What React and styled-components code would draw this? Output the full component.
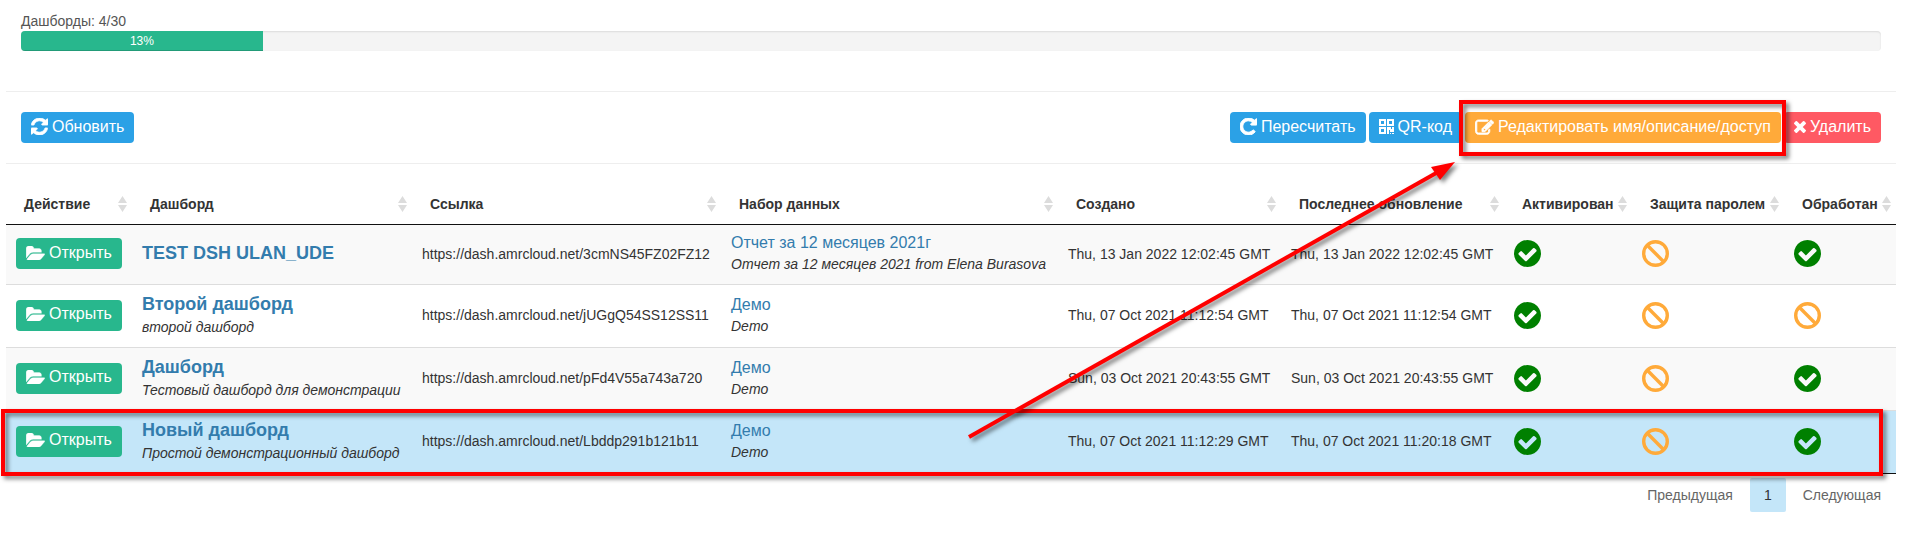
import React from "react";
import styled, { createGlobalStyle, css } from "styled-components";

const GlobalStyle = createGlobalStyle`
  * { box-sizing: border-box; }
  body {
    margin: 0;
    background: #fff;
    color: #333;
    font: 14px/20px "Liberation Sans", Arial, sans-serif;
  }
`;

const tones = { info: "#2ba1e6", success: "#28b78d", warning: "#ffaa3a", danger: "#ff5963" };

const Page = styled.main`
  position: relative;
  padding: 12px 15px 0 6px;
`;

const Usage = styled.section`
  padding: 0 15px 40px;
  color: #555;
`;

const UsageLabel = styled.div`
  line-height: 19px;
`;

const Track = styled.div`
  height: 20px;
  overflow: hidden;
  border-radius: 4px;
  background: #f4f4f4;
  box-shadow: inset 0 1px 2px rgba(0, 0, 0, 0.1);
`;

const Fill = styled.div`
  height: 100%;
  background: ${tones.success};
  box-shadow: inset 0 -1px 0 rgba(0, 0, 0, 0.15);
  color: #fff;
  font-size: 12px;
  line-height: 20px;
  text-align: center;
`;

const Toolbar = styled.div`
  display: flex;
  justify-content: space-between;
  padding: 20px 15px;
  border-top: 1px solid #eee;
  border-bottom: 1px solid #eee;
`;

const ButtonGroup = styled.div`
  display: flex;
  gap: 3px;
`;

const Button = styled.button`
  display: inline-flex;
  align-items: center;
  gap: 4px;
  height: 31px;
  padding: 0 10px 2px;
  border: 0;
  border-radius: 4px;
  background: ${(p) => tones[p.$tone]};
  color: #fff;
  font: inherit;
  font-size: 16px;
  white-space: nowrap;
  cursor: pointer;
  vertical-align: middle;
`;

const outline = css`
  position: absolute;
  border: 4px solid #f00;
  filter: drop-shadow(3px 3px 2px rgba(0, 0, 0, 0.5));
  pointer-events: none;
`;

const Marked = styled.div`
  position: relative;
  z-index: 1;
  &::after {
    content: "";
    inset: -12px -5px -13px -6px;
    ${outline}
  }
`;

const Table = styled.table`
  width: 100%;
  margin-top: 20px;
  border-collapse: separate;
  border-spacing: 0;
  border-bottom: 1px solid #111;
  table-layout: fixed;
`;

const Head = styled.th`
  height: 41px;
  padding: 0 5px 0 18px;
  border-bottom: 1px solid #111;
  font-weight: bold;
  text-align: left;
  white-space: nowrap;
`;

const HeadInner = styled.div`
  display: flex;
  align-items: center;
  justify-content: space-between;
`;

const Row = styled.tr`
  position: relative;
  background: ${(p) => (p.$selected ? "#c4e6f9" : p.$odd ? "#f9f9f9" : "#fff")};
  &:not(:first-child) > td { border-top: 1px solid #ddd; }
  ${(p) => p.$selected && css`
    > td:first-child::after {
      content: "";
      inset: -1px 13px -3px -5px;
      ${outline}
    }
  `}
`;

const Cell = styled.td`
  padding: 9px 10px 11px;
  vertical-align: middle;
  white-space: nowrap;
`;

const Link = styled.a`
  display: block;
  color: #337cad;
  font-size: ${(p) => (p.$strong ? "18px" : "16px")};
  font-weight: ${(p) => (p.$strong ? "bold" : "normal")};
  line-height: ${(p) => (p.$strong ? "21px" : "18px")};
  text-decoration: none;
`;

const Note = styled.em`
  display: block;
  margin-top: 4px;
  line-height: 17px;
`;

const Pager = styled.nav`
  display: flex;
  justify-content: flex-end;
  gap: 3px;
  padding: 4px 1px 28px;
`;

const PageButton = styled.button`
  height: 34px;
  padding: 0 14px;
  border: 0;
  border-radius: 2px;
  background: ${(p) => (p.$current ? "#c4e6f9" : "transparent")};
  color: ${(p) => (p.$current ? "#333" : "#666")};
  font: inherit;
`;

const ArrowLayer = styled.svg`
  position: absolute;
  top: 0;
  left: 0;
  z-index: 2;
  pointer-events: none;
  filter: drop-shadow(3px 3px 2px rgba(0, 0, 0, 0.5));
`;

const glyphs = {
  refresh: [17, 17, "0 0 1536 1536", "M1511 928q0 5-1 7-64 268-268 434.5T764 1536q-146 0-282.5-55T238 1324l-129 129q-19 19-45 19t-45-19-19-45V960q0-26 19-45t45-19h448q26 0 45 19t19 45-19 45l-137 137q71 66 161 102t187 36q134 0 250-65t186-179q11-17 53-117 8-23 30-23h192q13 0 22.5 9.5t9.5 22.5zm25-800v448q0 26-19 45t-45 19h-448q-26 0-45-19t-19-45 19-45l138-138Q969 256 768 256q-134 0-250 65T332 500q-11 17-53 117-8 23-30 23H50q-13 0-22.5-9.5T18 608v-7q65-268 270-434.5T768 0q146 0 284 55.5T1297 212l130-129q19-19 45-19t45 19 19 45z", 70],
  repeat: [17, 17, "128 128 1536 1536", "M1664 256v448q0 26-19 45t-45 19h-448q-42 0-59-40-17-39 14-69l138-138Q1097 384 896 384q-104 0-198.5 40.5T534 534 424.5 697.5 384 896t40.5 198.500T534 1258t163.500 109.500T896 1408q119 0 225-52t179-147q7-10 23-12 15 0 25 9l137 138q9 8 9.500 20.500t-7.500 22.500q-109 132-264 204.500T896 1664q-156 0-298-61t-245-164-164-245-61-298 61-298 164-245 245-164 298-61q147 0 284.500 55.500T1425 340l130-129q29-31 70-14 39 17 39 59z", 90],
  qrcode: [15, 15, "0 0 15 15", "M0 0h7v7H0zM2 2v3h3V2zM8 0h7v7H8zM10 2v3h3V2zM0 8h7v7H0zM2 10v3h3v-3zM8 8h4v2h1V8h2v5h-4v-2h-1v4H8zM11 14h1v1h-1zM13 14h2v1h-2z", 0],
  edit: [19, 17, "-50 -50 1874 1636", "M888 1184l116-116-152-152-116 116v56h96v96h56zm440-720q-16-16-33 1L945 815q-17 17-1 33t33-1l350-350q17-17 1-33zm80 594v190q0 119-84.5 203.500T1120 1536H288q-119 0-203.500-84.500T0 1248V416q0-119 84.500-203.500T288 128h832q63 0 117 25 15 7 18 23 3 17-9 29l-49 49q-14 14-32 8-23-6-45-6H288q-66 0-113 47t-47 113v832q0 66 47 113t113 47h832q66 0 113-47t47-113v-126q0-13 9-22l64-64q15-15 35-7t20 29zm-96-738l288 288-672 672H640V992zm444 132l-92 92-288-288 92-92q28-28 68-28t68 28l152 152q28 28 28 68t-28 68z", 90],
  times: [12, 12, "110 366 1188 1188", "M1298 1322q0 40-28 68l-136 136q-28 28-68 28t-68-28l-294-294-294 294q-28 28-68 28t-68-28l-136-136q-28-28-28-68t28-68l294-294-294-294q-28-28-28-68t28-68l136-136q28-28 68-28t68 28l294 294 294-294q28-28 68-28t68 28l136 136q28 28 28 68t-28 68l-294 294 294 294q28 28 28 68z", 0],
  folder: [19, 14, "0 128 1879 1408", "M1879 952q0 31-31 66l-336 396q-43 51-120.500 86.500T1248 1536H160q-34 0-60.500-13T73 1480q0-31 31-66l336-396q43-51 120.500-86.500T704 896h1088q34 0 60.500 13t26.500 43zM1536 608v160H704q-94 0-197 47.500T343 935L6 1331l-5 6q0-4-.5-12.500T0 1312V352q0-92 66-158t158-66h320q92 0 158 66t66 158v32h544q92 0 158 66t66 158z", 30],
  check: [27, 27, "0 0 1536 1536", "M1284 606q0-28-18-46l-91-90q-19-19-45-19t-45 19l-408 407-226-226q-19-19-45-19t-45 19l-91 90q-18 18-18 46 0 27 18 45l362 362q19 19 45 19 27 0 46-19l543-543q18-18 18-45zm252 162q0 209-103 385.500T1153.500 1433 768 1536t-385.500-103T103 1153.500 0 768t103-385.500T382.500 103 768 0t385.500 103T1433 382.500 1536 768z", 0],
};

function Icon({ name }) {
  const [width, height, viewBox, d, weight] = glyphs[name];
  return (
    <svg width={width} height={height} viewBox={viewBox} fill="currentColor" stroke={weight ? "currentColor" : "none"} strokeWidth={weight} aria-hidden="true">
      <path d={d} fillRule={name === "qrcode" ? "evenodd" : "nonzero"} />
    </svg>
  );
}

const StatusBox = styled.span`
  display: flex;
  color: green;
`;

function Status({ on }) {
  return (
    <StatusBox role="img" aria-label={on ? "Да" : "Нет"}>
      {on ? (
        <Icon name="check" />
      ) : (
        <svg width="27" height="27" viewBox="0 0 27 27" fill="none" stroke="#ffaa3a" strokeWidth="3.4">
          <circle cx="13.5" cy="13.5" r="11.8" />
          <path d="M5.300 5.300L21.700 21.700" />
        </svg>
      )}
    </StatusBox>
  );
}

function SortMark() {
  return (
    <svg width="9" height="16" viewBox="0 0 9 16" fill="#dcdcdc" aria-hidden="true">
      <path d="M4.500 0L9 7H0zM0 9h9l-4.500 7z" />
    </svg>
  );
}

const columns = [
  ["Действие", 126],
  ["Дашборд", 280],
  ["Ссылка", 309],
  ["Набор данных", 337],
  ["Создано", 223],
  ["Последнее обновление", 223],
  ["Активирован", 128],
  ["Защита паролем", 152],
  ["Обработан", 112],
];

const rows = [
  { name: "TEST DSH ULAN_UDE", url: "https://dash.amrcloud.net/3cmNS45FZ02FZ12", set: "Отчет за 12 месяцев 2021г", setNote: "Отчет за 12 месяцев 2021 from Elena Burasova", created: "Thu, 13 Jan 2022 12:02:45 GMT", updated: "Thu, 13 Jan 2022 12:02:45 GMT", done: true },
  { name: "Второй дашборд", note: "второй дашборд", url: "https://dash.amrcloud.net/jUGgQ54SS12SS11", set: "Демо", setNote: "Demo", created: "Thu, 07 Oct 2021 11:12:54 GMT", updated: "Thu, 07 Oct 2021 11:12:54 GMT", done: false },
  { name: "Дашборд", note: "Тестовый дашборд для демонстрации", url: "https://dash.amrcloud.net/pFd4V55a743a720", set: "Демо", setNote: "Demo", created: "Sun, 03 Oct 2021 20:43:55 GMT", updated: "Sun, 03 Oct 2021 20:43:55 GMT", done: true },
  { name: "Новый дашборд", note: "Простой демонстрационный дашборд", url: "https://dash.amrcloud.net/Lbddp291b121b11", set: "Демо", setNote: "Demo", created: "Thu, 07 Oct 2021 11:12:29 GMT", updated: "Thu, 07 Oct 2021 11:20:18 GMT", done: true, selected: true },
];

export default function App() {
  const percent = 13;
  return (
    <Page>
      <GlobalStyle />
      <Usage>
        <UsageLabel id="usage">Дашборды: 4/30</UsageLabel>
        <Track role="progressbar" aria-labelledby="usage" aria-valuenow={percent}>
          <Fill style={{ width: `${percent}%` }}>{percent}%</Fill>
        </Track>
      </Usage>
      <Toolbar>
        <Button $tone="info"><Icon name="refresh" />Обновить</Button>
        <ButtonGroup>
          <Button $tone="info"><Icon name="repeat" />Пересчитать</Button>
          <Button $tone="info"><Icon name="qrcode" />QR-код</Button>
          <Marked>
            <Button $tone="warning"><Icon name="edit" />Редактировать имя/описание/доступ</Button>
          </Marked>
          <Button $tone="danger"><Icon name="times" />Удалить</Button>
        </ButtonGroup>
      </Toolbar>
      <Table>
        <colgroup>
          {columns.map(([title, width]) => <col key={title} width={width} />)}
        </colgroup>
        <thead>
          <tr>
            {columns.map(([title]) => (
              <Head key={title} scope="col">
                <HeadInner>{title}<SortMark /></HeadInner>
              </Head>
            ))}
          </tr>
        </thead>
        <tbody>
          {rows.map((r, i) => (
            <Row key={r.name} $odd={i % 2 === 0} $selected={r.selected}>
              <Cell><Button $tone="success"><Icon name="folder" />Открыть</Button></Cell>
              <Cell><Link href="#" $strong>{r.name}</Link>{r.note && <Note>{r.note}</Note>}</Cell>
              <Cell>{r.url}</Cell>
              <Cell><Link href="#">{r.set}</Link><Note>{r.setNote}</Note></Cell>
              <Cell>{r.created}</Cell>
              <Cell>{r.updated}</Cell>
              <Cell><Status on /></Cell>
              <Cell><Status on={false} /></Cell>
              <Cell><Status on={r.done} /></Cell>
            </Row>
          ))}
        </tbody>
      </Table>
      <Pager aria-label="Страницы">
        <PageButton>Предыдущая</PageButton>
        <PageButton $current>1</PageButton>
        <PageButton>Следующая</PageButton>
      </Pager>
      <ArrowLayer width="1500" height="460" aria-hidden="true">
        <path d="M969 437L1438 172" stroke="#f00" strokeWidth="4" />
        <path d="M1455 162L1431 167L1440 180z" fill="#f00" />
      </ArrowLayer>
    </Page>
  );
}
